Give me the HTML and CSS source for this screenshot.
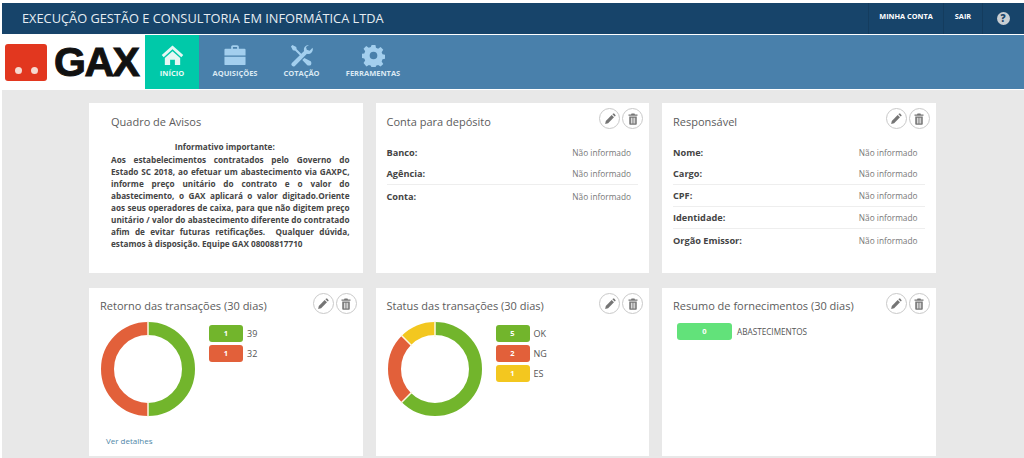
FILE: index.html
```html
<!DOCTYPE html>
<html lang="pt-BR">
<head>
    <meta charset="UTF-8">
    <title>GAX</title>
    <link rel="stylesheet" href="styles.css">
</head>
<body>
    <svg class="sprites" width="0" height="0">
        <symbol id="i-pencil" viewBox="0 0 16 16">
            <path d="M1.500 14.500l.9-4 7.800-7.800 3.100 3.100-7.800 7.800z"/>
            <path d="M11.200 1.700l.9-.9c.4-.4 1-.4 1.400 0l1.700 1.700c.4.4.4 1 0 1.400l-.9.9z"/>
        </symbol>
        <symbol id="i-trash" viewBox="0 0 16 16">
            <path d="M6 .6h4l.6 1.400H14v1.800H2V2h3.400z"/>
            <path fill-rule="evenodd" d="M3 4.600h10v9.800c0 .8-.6 1.400-1.400 1.400H4.400c-.8 0-1.400-.6-1.400-1.400zm2.200 1.600v7.800h1.100V6.200zm2.300 0v7.800h1.100V6.200zm2.300 0v7.800h1.100V6.200z"/>
        </symbol>
    </svg>

    <!-- barra superior -->
    <header class="topbar">
        <div class="company">EXECUÇÃO GESTÃO E CONSULTORIA EM INFORMÁTICA LTDA</div>
        <a class="top-link top-account">MINHA CONTA</a>
        <a class="top-link top-exit">SAIR</a>
        <a class="top-link top-help"><span class="help-icon">?</span></a>
    </header>

    <!-- menu -->
    <nav class="navbar">
        <div class="logo">
            <span class="logo-mark"><i></i><i></i></span>
            <span class="logo-text">GAX</span>
        </div>
        <a class="nav-item active">
            <svg viewBox="0 0 24 24" width="23" height="23"><path d="M12 1.500L.8 11.500l2 2.200L12 5.600l9.200 8.100 2-2.200z"/><path d="M4 14.500L12 7.500l8 7v7.500h-5.500v-5.500h-5V22H4z"/></svg>
            <span>INÍCIO</span>
        </a>
        <a class="nav-item">
            <svg viewBox="0 0 24 24" width="24" height="23"><path fill-rule="evenodd" d="M8 5V3c0-1 .8-1.800 1.800-1.800h4.400c1 0 1.800.8 1.800 1.800v2h6c.6 0 1 .4 1 1v6H1V6c0-.6.4-1 1-1zm1.800 0h4.400V3H9.800z"/><path d="M1 13.200h22V21c0 .6-.4 1-1 1H2c-.6 0-1-.4-1-1z"/></svg>
            <span>AQUISIÇÕES</span>
        </a>
        <a class="nav-item">
            <svg viewBox="0 0 24 24" width="23" height="23"><path d="M2.500 1L1 2.500l2 4 2.500.5 6 6 1.500-1.500-6-6L6.500 3z"/><path d="M19.500 1a4.800 4.800 0 0 0-4.800 6.200L2 19.800a2.200 2.200 0 0 0 3.100 3.100L17.700 10.300A4.800 4.800 0 0 0 23.500 4l-3 3-3-1 -.8-3 3-2z"/><path d="M15 14.500l-2.200 2.200 5 5.300c.7.700 3.200.8 4-.2.800-1 .6-3-.2-3.800z"/></svg>
            <span>COTAÇÃO</span>
        </a>
        <a class="nav-item">
            <svg viewBox="0 0 24 24" width="23" height="23"><path fill-rule="evenodd" d="M10 1h4l.6 3 2.200.9 2.600-1.700 2.800 2.800-1.700 2.600.9 2.200 3 .6v4l-3 .6-.9 2.200 1.700 2.600-2.800 2.800-2.600-1.700-2.200.9-.6 3h-4l-.6-3-2.200-.9-2.600 1.700L1.600 19.800l1.700-2.600-.9-2.200-3-.6v-4l3-.6.9-2.200L1.600 5 4.400 2.200 7 3.900 9.200 3zM12 8a4 4 0 1 0 0 8 4 4 0 0 0 0-8z"/></svg>
            <span>FERRAMENTAS</span>
        </a>
    </nav>

    <!-- painel -->
    <main class="dashboard">
        <section class="card">
            <h2 class="card-title notice-title">Quadro de Avisos</h2>
            <div class="notice">
                <p class="notice-head">Informativo importante:</p>
                <p>Aos estabelecimentos contratados pelo Governo do Estado SC 2018, ao efetuar um abastecimento via GAXPC, informe preço unitário do contrato e o valor do abastecimento, o GAX aplicará o valor digitado.Oriente aos seus operadores de caixa, para que não digitem preço unitário / valor do abastecimento diferente do contratado afim de evitar futuras retificações.&nbsp; Qualquer dúvida, estamos à disposição. Equipe GAX 08008817710</p>
            </div>
        </section>

        <section class="card">
            <div class="card-tools">
                <button class="round-btn"><svg><use href="#i-pencil"/></svg></button>
                <button class="round-btn"><svg><use href="#i-trash"/></svg></button>
            </div>
            <h2 class="card-title info-title">Conta para depósito</h2>
            <dl class="info">
                <div class="info-row plain"><dt>Banco:</dt><dd>Não informado</dd></div>
                <div class="info-row"><dt>Agência:</dt><dd>Não informado</dd></div>
                <div class="info-row plain"><dt>Conta:</dt><dd>Não informado</dd></div>
            </dl>
        </section>

        <section class="card">
            <div class="card-tools">
                <button class="round-btn"><svg><use href="#i-pencil"/></svg></button>
                <button class="round-btn"><svg><use href="#i-trash"/></svg></button>
            </div>
            <h2 class="card-title info-title">Responsável</h2>
            <dl class="info">
                <div class="info-row plain"><dt>Nome:</dt><dd>Não informado</dd></div>
                <div class="info-row"><dt>Cargo:</dt><dd>Não informado</dd></div>
                <div class="info-row"><dt>CPF:</dt><dd>Não informado</dd></div>
                <div class="info-row"><dt>Identidade:</dt><dd>Não informado</dd></div>
                <div class="info-row plain"><dt>Orgão Emissor:</dt><dd>Não informado</dd></div>
            </dl>
        </section>

        <section class="card">
            <div class="card-tools">
                <button class="round-btn"><svg><use href="#i-pencil"/></svg></button>
                <button class="round-btn"><svg><use href="#i-trash"/></svg></button>
            </div>
            <h2 class="card-title chart-title">Retorno das transações (30 dias)</h2>
            <div class="chart">
                <svg class="donut" viewBox="0 0 96 96" width="96" height="96">
                    <circle class="ring green" cx="48" cy="48" r="40.500" pathLength="360" stroke-dasharray="180 180"/>
                    <circle class="ring red" cx="48" cy="48" r="40.500" pathLength="360" stroke-dasharray="180 180" stroke-dashoffset="-180"/>
                    <path class="cut" d="M48 0v16M48 80v16"/>
                </svg>
                <ul class="legend">
                    <li><span class="pill bg-green">1</span>39</li>
                    <li><span class="pill bg-red">1</span>32</li>
                </ul>
            </div>
            <a class="more">Ver detalhes</a>
        </section>

        <section class="card">
            <div class="card-tools">
                <button class="round-btn"><svg><use href="#i-pencil"/></svg></button>
                <button class="round-btn"><svg><use href="#i-trash"/></svg></button>
            </div>
            <h2 class="card-title chart-title">Status das transações (30 dias)</h2>
            <div class="chart">
                <svg class="donut" viewBox="0 0 96 96" width="96" height="96">
                    <circle class="ring green" cx="48" cy="48" r="40.500" pathLength="360" stroke-dasharray="225 135"/>
                    <circle class="ring red" cx="48" cy="48" r="40.500" pathLength="360" stroke-dasharray="90 270" stroke-dashoffset="-225"/>
                    <circle class="ring yellow" cx="48" cy="48" r="40.500" pathLength="360" stroke-dasharray="45 315" stroke-dashoffset="-315"/>
                    <path class="cut" d="M48 0v16M14 82l11-11M14 14l11 11"/>
                </svg>
                <ul class="legend">
                    <li><span class="pill bg-green">5</span>OK</li>
                    <li><span class="pill bg-red">2</span>NG</li>
                    <li><span class="pill bg-yellow">1</span>ES</li>
                </ul>
            </div>
        </section>

        <section class="card">
            <div class="card-tools">
                <button class="round-btn"><svg><use href="#i-pencil"/></svg></button>
                <button class="round-btn"><svg><use href="#i-trash"/></svg></button>
            </div>
            <h2 class="card-title chart-title">Resumo de fornecimentos (30 dias)</h2>
            <div class="supply">
                <span class="pill pill-wide">0</span>ABASTECIMENTOS
            </div>
        </section>
    </main>
</body>
</html>
```

FILE: styles.css
```css
html, body {
    margin: 0;
    padding: 0;
    height: 458px;
    overflow: hidden;
    background-color: #fff;
    font-family: "Open Sans", Arial, sans-serif;
}

body {
    padding: 3px 0 0 2px;
    box-sizing: border-box;
}

.sprites {
    position: absolute;
}

/* barra superior */
.topbar {
    display: flex;
    align-items: stretch;
    height: 31px;
    background-color: #17446a;
    color: #fff;
}

.company {
    flex: 1;
    padding: 5px 0 0 20px;
    font-size: 12.800px;
    line-height: 20px;
    color: #e6edf2;
}

.top-link {
    display: flex;
    justify-content: center;
    padding-top: 8px;
    font-size: 7.300px;
    line-height: 11px;
    font-weight: 700;
    border-left: 1px solid #143c5e;
}

.top-account {
    width: 74px;
}

.top-exit {
    width: 38px;
}

.top-help {
    width: 40px;
    padding-top: 9px;
    margin-right: 1px;
}

.help-icon {
    width: 13px;
    height: 13px;
    border-radius: 50%;
    background-color: #c9ced2;
    color: #17446a;
    text-align: center;
    font-size: 10px;
    line-height: 13px;
    font-weight: 800;
}

/* menu */
.navbar {
    display: flex;
    height: 54px;
    margin-top: 1px;
    background-color: #4980ab;
}

.logo {
    display: flex;
    align-items: center;
    width: 143px;
    padding-left: 3px;
    box-sizing: border-box;
    background-color: #fff;
}

.logo-mark {
    display: flex;
    align-items: flex-end;
    justify-content: center;
    gap: 9px;
    width: 42px;
    height: 37px;
    padding-bottom: 7px;
    box-sizing: border-box;
    border-radius: 3px;
    background-color: #e2371f;
    margin-top: 1px;
}

.logo-mark i {
    width: 7px;
    height: 7px;
    border-radius: 50%;
    background-color: #f6d9d0;
}

.logo-text {
    margin-left: 7px;
    font-family: "Liberation Sans", Arial, sans-serif;
    font-size: 41px;
    line-height: 40px;
    font-weight: 700;
    letter-spacing: -1.500px;
    color: #111;
    -webkit-text-stroke: 1px #111;
}

.nav-item {
    display: flex;
    flex-direction: column;
    align-items: center;
    padding-top: 9px;
    box-sizing: border-box;
    color: #dbe9f3;
    font-size: 7.500px;
    line-height: 10px;
    font-weight: 700;
}

.nav-item svg {
    fill: #a3cfee;
    margin-bottom: 1px;
}

.nav-item.active {
    width: 54px;
    background-color: #00c9a9;
    color: #e8fbf7;
}

.nav-item.active svg {
    fill: #e6f7f4;
}

.nav-item:nth-child(3) {
    width: 72px;
}

.nav-item:nth-child(4) {
    width: 61px;
}

.nav-item:nth-child(5) {
    width: 82px;
}

/* painel */
.dashboard {
    display: grid;
    grid-template-columns: repeat(3, 273.500px);
    grid-template-rows: 170px 168px;
    column-gap: 13px;
    row-gap: 15px;
    height: 369px;
    margin-top: 1px;
    padding: 13px 0 0 87px;
    box-sizing: border-box;
    background-color: #e8e8e8;
}

.card {
    position: relative;
    background-color: #fff;
    color: #444;
}

.card-title {
    margin: 0;
    font-size: 11px;
    line-height: 16px;
    font-weight: 400;
    color: #5c5c5c;
}

.notice-title {
    padding: 11px 0 0 22px;
}

.info-title {
    padding: 11px 0 0 11px;
}

.chart-title {
    padding: 10px 0 0 11px;
}

.card-tools {
    position: absolute;
    top: 5px;
    right: 6px;
    display: flex;
    gap: 2px;
}

.round-btn {
    width: 21px;
    height: 21px;
    padding: 0;
    display: flex;
    align-items: center;
    justify-content: center;
    border: 1px solid #c9c9c9;
    border-radius: 50%;
    background-color: #fff;
}

.round-btn svg {
    width: 12px;
    height: 12px;
    fill: #757575;
}

/* avisos */
.notice {
    margin: 10px 13px 0 22px;
    font-size: 8.200px;
    line-height: 12px;
    font-weight: 700;
    color: #444;
    text-align: justify;
}

.notice p {
    margin: 0;
}

.notice-head {
    text-align: center;
    line-height: 14px;
    padding-right: 11px;
}

/* dados */
.info {
    margin: 11px 11px 0 11px;
}

.info-row {
    display: flex;
    justify-content: space-between;
    align-items: center;
    height: 21px;
    border-bottom: 1px solid #eee;
    padding-right: 7px;
}

.info-row.plain {
    border-bottom: 0;
    height: 22px;
}

.info-row dt {
    font-size: 9.200px;
    font-weight: 700;
    color: #444;
}

.info-row dd {
    margin: 0;
    font-size: 8.300px;
    color: #777;
}

/* graficos */
.chart {
    display: flex;
    margin: 7px 0 0 11px;
}

.donut {
    display: block;
    flex: none;
}

.ring {
    fill: none;
    stroke-width: 13px;
    transform: rotate(-90deg);
    transform-origin: 48px 48px;
}

.green {
    stroke: #72b52c;
}

.red {
    stroke: #e2603a;
}

.yellow {
    stroke: #f3c71f;
}

.cut {
    stroke: #fff8e0;
    stroke-width: 1.500px;
}

.legend {
    list-style: none;
    margin: 2px 0 0 13px;
    padding: 0;
}

.legend li {
    display: flex;
    align-items: center;
    height: 20px;
    font-size: 9px;
    color: #555;
}

.pill {
    display: inline-block;
    width: 34px;
    height: 17px;
    margin-right: 4px;
    border-radius: 3px;
    text-align: center;
    color: #fff;
    font-size: 7.500px;
    line-height: 17px;
    font-weight: 700;
}

.bg-green {
    background-color: #72b52c;
}

.bg-red {
    background-color: #e2603a;
}

.bg-yellow {
    background-color: #f3c71f;
}

.more {
    display: block;
    margin: 18px 0 0 17px;
    font-size: 8px;
    line-height: 11px;
    color: #4f87a8;
}

.supply {
    display: flex;
    align-items: center;
    margin: 9px 0 0 15px;
    font-size: 8.200px;
    color: #555;
}

.pill-wide {
    width: 55px;
    margin-right: 5px;
    background-color: #62e27a;
}
```
